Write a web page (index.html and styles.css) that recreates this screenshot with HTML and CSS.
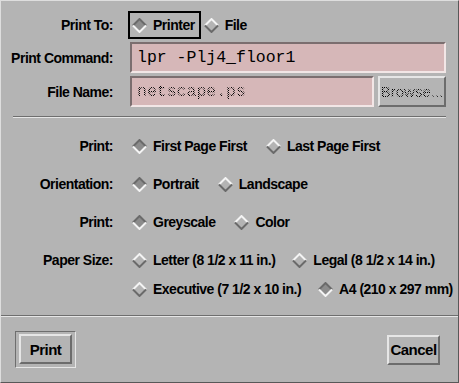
FILE: index.html
```html
<!DOCTYPE html>
<html>
<head>
<meta charset="utf-8">
<link rel="stylesheet" href="styles.css">
</head>
<body>
<div class="dialog">
  <div class="form">
    <span class="label">Print To:</span>
    <div class="ctrl">
      <span class="focus">
        <span class="opt"><svg class="dia on" width="15" height="15" viewBox="0 0 15 15"><polygon points="7.5,0.5 14.5,7.5 7.5,14.5 0.5,7.5"/><path class="hi" d="M1,7.5 L7.5,1 L14,7.5"/><path class="lo" d="M1,7.5 L7.5,14 L14,7.5"/></svg>Printer</span>
      </span>
      <span class="opt"><svg class="dia off" width="15" height="15" viewBox="0 0 15 15"><polygon points="7.5,0.5 14.5,7.5 7.5,14.5 0.5,7.5"/><path class="hi" d="M1,7.5 L7.5,1 L14,7.5"/><path class="lo" d="M1,7.5 L7.5,14 L14,7.5"/></svg>File</span>
    </div>

    <span class="label">Print Command:</span>
    <div class="ctrl">
      <div class="field"><span class="mono">lpr -Plj4_floor1</span></div>
    </div>

    <span class="label">File Name:</span>
    <div class="ctrl">
      <div class="field"><span class="mono stipple">netscape.ps</span></div>
      <div class="btn browse"><span class="stipple">Browse...</span></div>
    </div>
  </div>

  <div class="sep short"></div>

  <div class="options">
    <span class="label">Print:</span>
    <div class="opts">
      <span class="opt"><svg class="dia on" width="15" height="15" viewBox="0 0 15 15"><polygon points="7.5,0.5 14.5,7.5 7.5,14.5 0.5,7.5"/><path class="hi" d="M1,7.5 L7.5,1 L14,7.5"/><path class="lo" d="M1,7.5 L7.5,14 L14,7.5"/></svg>First Page First</span>
      <span class="opt"><svg class="dia off" width="15" height="15" viewBox="0 0 15 15"><polygon points="7.5,0.5 14.5,7.5 7.5,14.5 0.5,7.5"/><path class="hi" d="M1,7.5 L7.5,1 L14,7.5"/><path class="lo" d="M1,7.5 L7.5,14 L14,7.5"/></svg>Last Page First</span>
    </div>

    <span class="label">Orientation:</span>
    <div class="opts">
      <span class="opt"><svg class="dia on" width="15" height="15" viewBox="0 0 15 15"><polygon points="7.5,0.5 14.5,7.5 7.5,14.5 0.5,7.5"/><path class="hi" d="M1,7.5 L7.5,1 L14,7.5"/><path class="lo" d="M1,7.5 L7.5,14 L14,7.5"/></svg>Portrait</span>
      <span class="opt"><svg class="dia off" width="15" height="15" viewBox="0 0 15 15"><polygon points="7.5,0.5 14.5,7.5 7.5,14.5 0.5,7.5"/><path class="hi" d="M1,7.5 L7.5,1 L14,7.5"/><path class="lo" d="M1,7.5 L7.5,14 L14,7.5"/></svg>Landscape</span>
    </div>

    <span class="label">Print:</span>
    <div class="opts">
      <span class="opt"><svg class="dia on" width="15" height="15" viewBox="0 0 15 15"><polygon points="7.5,0.5 14.5,7.5 7.5,14.5 0.5,7.5"/><path class="hi" d="M1,7.5 L7.5,1 L14,7.5"/><path class="lo" d="M1,7.5 L7.5,14 L14,7.5"/></svg>Greyscale</span>
      <span class="opt"><svg class="dia off" width="15" height="15" viewBox="0 0 15 15"><polygon points="7.5,0.5 14.5,7.5 7.5,14.5 0.5,7.5"/><path class="hi" d="M1,7.5 L7.5,1 L14,7.5"/><path class="lo" d="M1,7.5 L7.5,14 L14,7.5"/></svg>Color</span>
    </div>

    <span class="label">Paper Size:</span>
    <div class="opts stack">
      <div class="line">
        <span class="opt"><svg class="dia off" width="15" height="15" viewBox="0 0 15 15"><polygon points="7.5,0.5 14.5,7.5 7.5,14.5 0.5,7.5"/><path class="hi" d="M1,7.5 L7.5,1 L14,7.5"/><path class="lo" d="M1,7.5 L7.5,14 L14,7.5"/></svg>Letter (8 1/2 x 11 in.)</span>
        <span class="opt"><svg class="dia off" width="15" height="15" viewBox="0 0 15 15"><polygon points="7.5,0.5 14.5,7.5 7.5,14.5 0.5,7.5"/><path class="hi" d="M1,7.5 L7.5,1 L14,7.5"/><path class="lo" d="M1,7.5 L7.5,14 L14,7.5"/></svg>Legal (8 1/2 x 14 in.)</span>
      </div>
      <div class="line">
        <span class="opt"><svg class="dia off" width="15" height="15" viewBox="0 0 15 15"><polygon points="7.5,0.5 14.5,7.5 7.5,14.5 0.5,7.5"/><path class="hi" d="M1,7.5 L7.5,1 L14,7.5"/><path class="lo" d="M1,7.5 L7.5,14 L14,7.5"/></svg>Executive (7 1/2 x 10 in.)</span>
        <span class="opt"><svg class="dia on" width="15" height="15" viewBox="0 0 15 15"><polygon points="7.5,0.5 14.5,7.5 7.5,14.5 0.5,7.5"/><path class="hi" d="M1,7.5 L7.5,1 L14,7.5"/><path class="lo" d="M1,7.5 L7.5,14 L14,7.5"/></svg>A4 (210 x 297 mm)</span>
      </div>
    </div>
  </div>

  <div class="sep full"></div>

  <div class="actions">
    <div class="default-ring"><div class="btn action">Print</div></div>
    <div class="btn action">Cancel</div>
  </div>
</div>
</body>
</html>
```

FILE: styles.css
```css
* { box-sizing: border-box; }

html, body {
  margin: 0;
  padding: 0;
  background: #b4b4b4;
}

body {
  font-family: "Liberation Sans", Arial, sans-serif;
  font-weight: bold;
  font-size: 14px;
  letter-spacing: -0.5px;
  color: #000;
}

.dialog {
  width: 459px;
  height: 383px;
  background: #b4b4b4;
  border: 1px solid;
  border-color: #dedede #585858 #585858 #dedede;
  display: flex;
  flex-direction: column;
}

.form {
  display: grid;
  grid-template-columns: 112px 1fr;
  grid-template-rows: 28px 31px 31px;
  column-gap: 15px;
  row-gap: 3px;
  align-items: center;
  padding: 10px 12px 0 0;
}

.label {
  text-align: right;
  white-space: nowrap;
}

.ctrl {
  display: flex;
  align-items: center;
  height: 100%;
}

.focus {
  display: flex;
  align-items: center;
  height: 28px;
  border: 2px solid #000;
  padding: 0 4px 0 2px;
  margin-right: 3px;
}

.opt {
  display: inline-flex;
  align-items: center;
  gap: 6px;
  white-space: nowrap;
  height: 20px;
}

.dia { display: block; flex: none; }
.dia path { fill: none; stroke-width: 2; }
.dia.on polygon { fill: #8c8c8c; }
.dia.on .hi { stroke: #6a6a6a; }
.dia.on .lo { stroke: #f4f4f4; }
.dia.off polygon { fill: #b4b4b4; }
.dia.off .hi { stroke: #f4f4f4; }
.dia.off .lo { stroke: #6a6a6a; }

.field {
  flex: 1;
  height: 100%;
  margin-left: 2px;
  background: #d6b7b8;
  border: 2px solid;
  border-color: #7b6e6f #f2e6e6 #f2e6e6 #7b6e6f;
  display: flex;
  align-items: center;
  padding-left: 5px;
}

.mono {
  font-family: "Liberation Mono", "Courier New", monospace;
  font-weight: normal;
  font-size: 16.5px;
  letter-spacing: 0;
}

.stipple {
  color: transparent;
  background-image: repeating-conic-gradient(#000 0 25%, transparent 0 50%);
  background-size: 2px 2px;
  -webkit-background-clip: text;
  background-clip: text;
}

.btn {
  display: flex;
  align-items: center;
  justify-content: center;
  border: 2px solid;
  border-color: #e6e6e6 #6c6c6c #6c6c6c #e6e6e6;
  background: #b4b4b4;
}

.browse {
  width: 68px;
  height: 100%;
  margin-left: 4px;
  font-size: 15px;
  font-weight: normal;
  letter-spacing: 0;
}

.sep {
  height: 2px;
  border-top: 1px solid #6e6e6e;
  border-bottom: 1px solid #e6e6e6;
}
.sep.short { margin: 9px 12px 0 12px; }
.sep.full { margin-top: auto; }

.options {
  display: grid;
  grid-template-columns: 112px 1fr;
  column-gap: 15px;
  row-gap: 18px;
  align-items: start;
  padding: 18px 12px 0 0;
}

.options .label { line-height: 20px; }

.opts {
  display: flex;
  gap: 19px;
  padding-left: 4px;
}

.opts.stack {
  flex-direction: column;
  gap: 9px;
}

.line {
  display: flex;
  gap: 17px;
}

.actions {
  height: 65px;
  display: flex;
  align-items: center;
  justify-content: space-between;
  padding: 0 18px 0 14px;
}

.default-ring {
  border: 1px solid;
  border-color: #6e6e6e #e6e6e6 #e6e6e6 #6e6e6e;
  padding: 2px 3px 3px 3px;
}

.action {
  width: 53px;
  height: 30px;
  font-size: 15px;
}
```
